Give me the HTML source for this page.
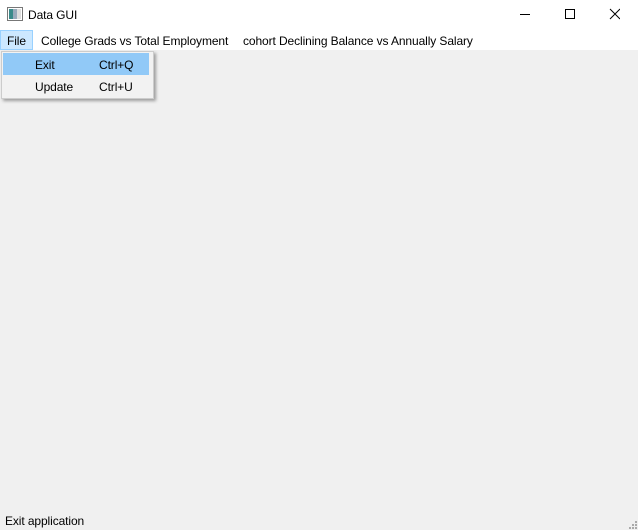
<!DOCTYPE html>
<html><head><meta charset="utf-8"><style>
*{margin:0;padding:0;box-sizing:border-box}
body{width:638px;height:530px;background:#f0f0f0;font-family:"Liberation Sans",sans-serif;font-size:12px;letter-spacing:-0.1px;color:#000;position:relative;overflow:hidden}
.title{position:absolute;left:0;top:0;width:638px;height:30px;background:#fff}
.menubar{position:absolute;left:0;top:30px;width:638px;height:20px;background:#fff}
.t{position:absolute;white-space:nowrap}
.file{position:absolute;left:0;top:30px;width:33px;height:20px;background:#cce8ff;border:1px solid #99d1ff}
.popup{position:absolute;left:1px;top:51px;width:153px;height:48px;background:#f2f2f2;border:1px solid #ccc;box-shadow:2px 2px 3px rgba(0,0,0,0.35)}
.hl{position:absolute;left:1px;top:1px;width:146px;height:22px;background:#91c9f7}
</style></head><body>
<div class="title">
<svg style="position:absolute;left:7px;top:7px" width="16" height="14"><rect x="0.5" y="0.5" width="15" height="13" fill="#fff" stroke="#777"/><rect x="2" y="2" width="4" height="10" fill="#3a8a8a"/><rect x="6" y="2" width="4" height="10" fill="#9ab"/><rect x="10" y="2" width="4" height="10" fill="#ddd"/></svg>
<div class="t" style="left:28px;top:8px">Data GUI</div>
<svg style="position:absolute;left:520px;top:8px" width="100" height="14"><line x1="0" y1="6.5" x2="10" y2="6.5" stroke="#000"/><rect x="45.5" y="1.5" width="9" height="9" fill="none" stroke="#000"/><path d="M90 1 L100 11 M100 1 L90 11" stroke="#000"/></svg>
</div>
<div class="menubar"></div>
<div class="file"></div>
<div class="t" style="left:7px;top:34px">File</div>
<div class="t" style="left:41px;top:34px">College Grads vs Total Employment</div>
<div class="t" style="left:243px;top:34px">cohort Declining Balance vs Annually Salary</div>
<div class="popup"><div class="hl"></div>
<div class="t" style="left:33px;top:6px">Exit</div>
<div class="t" style="left:97px;top:6px">Ctrl+Q</div>
<div class="t" style="left:33px;top:28px">Update</div>
<div class="t" style="left:97px;top:28px">Ctrl+U</div>
</div>
<div class="t" style="left:5px;top:514px">Exit application</div>
<svg style="position:absolute;left:628px;top:520px" width="10" height="10" fill="#aaa"><rect x="7" y="1" width="2" height="2"/><rect x="4" y="4" width="2" height="2"/><rect x="7" y="4" width="2" height="2"/><rect x="1" y="7" width="2" height="2"/><rect x="4" y="7" width="2" height="2"/><rect x="7" y="7" width="2" height="2"/></svg>
</body></html>
